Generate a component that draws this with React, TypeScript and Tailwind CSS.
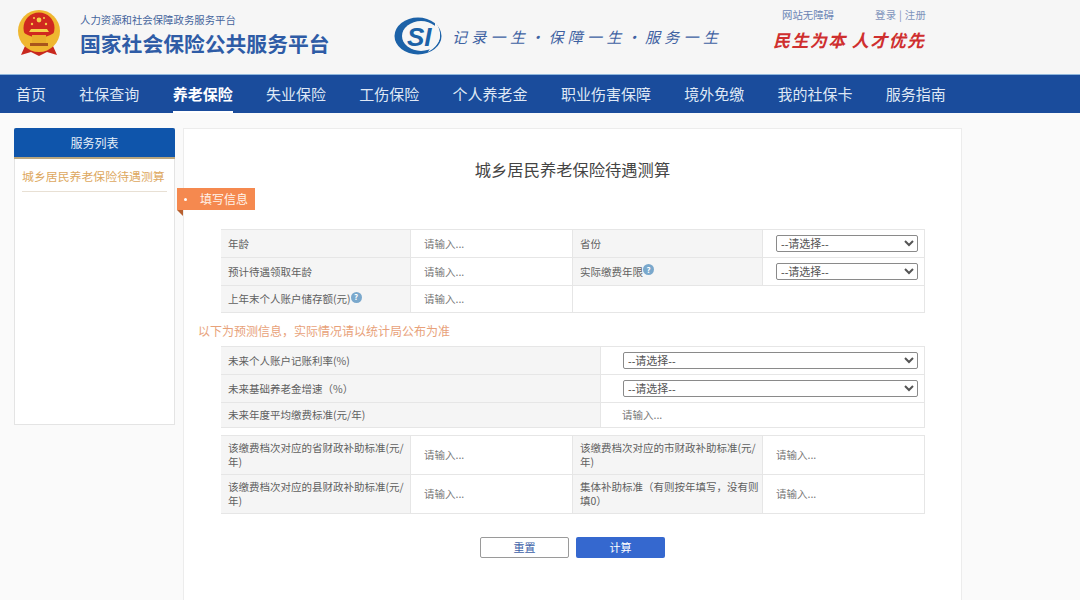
import React from 'react';

const navItems = ['首页', '社保查询', '养老保险', '失业保险', '工伤保险', '个人养老金', '职业伤害保障', '境外免缴', '我的社保卡', '服务指南'];

const Emblem = () => (
  <svg width="44" height="50" viewBox="0 0 44 50">
    <path d="M8 38 L4 47 L14 44 L22 48 L30 44 L40 47 L36 38 Z" fill="#c8281e" />
    <circle cx="22" cy="23" r="21" fill="#efb730" />
    <circle cx="22" cy="20" r="15.5" fill="#d0281f" />
    <path d="M7 25 Q22 34 37 25 L37 33 Q22 42 7 33 Z" fill="#efb730" />
    <rect x="15" y="27" width="14" height="8" fill="#e9ae2c" />
    <rect x="13" y="35" width="18" height="3" fill="#a8551c" />
    <circle cx="22" cy="12" r="2.4" fill="#f5d04a" />
    <circle cx="15" cy="16" r="1.2" fill="#f5d04a" />
    <circle cx="29" cy="16" r="1.2" fill="#f5d04a" />
    <circle cx="17" cy="10" r="1" fill="#f5d04a" />
    <circle cx="27" cy="10" r="1" fill="#f5d04a" />
    <path d="M12 24 H32 L30 21 H14 Z" fill="#f5d04a" />
  </svg>
);

const SiLogo = () => (
  <svg width="48" height="38" viewBox="0 0 48 38">
    <ellipse cx="24" cy="19" rx="23.5" ry="18.5" fill="#1c62a8" />
    <ellipse cx="27" cy="19" rx="19" ry="15" fill="#f6f6f6" />
    <path d="M41 5 Q47 12 46 20 Q44 30 34 35 Q42 24 41 5 Z" fill="#f6f6f6" />
    <text x="13" y="29" fontSize="26" fontWeight="700" fontStyle="italic" fill="#1c62a8" fontFamily="Liberation Sans, sans-serif">SI</text>
  </svg>
);

const Help = () => (
  <span className="inline-flex h-[11px] w-[11px] -translate-y-[3px] items-center justify-center rounded-full bg-[#7aa8cc] text-[8px] leading-none font-bold text-white">?</span>
);

const Label = ({ children, className = '' }: { children: React.ReactNode; className?: string }) => (
  <div className={`flex items-center bg-[#f5f5f5] pl-[7px] text-[10.5px] leading-[14px] text-[#5f5f5f] ${className}`}>
    <span>{children}</span>
  </div>
);

const TextCell = ({ className = '' }: { className?: string }) => (
  <div className={`flex items-center bg-white pl-[13px] ${className}`}>
    <input placeholder="请输入..." className="w-full bg-transparent text-[10.5px] outline-none placeholder:text-[#777]" />
  </div>
);

const SelectCell = ({ className = '' }: { className?: string }) => (
  <div className={`flex items-center bg-white pr-[6px] pl-[13px] ${className}`}>
    <select className="h-[17px] w-full rounded-[2px] border border-[#8a8a8a] bg-white py-0 font-['Liberation_Sans','Noto_Sans_CJK_SC',sans-serif] text-[11px] text-[#555]">
      <option>--请选择--</option>
    </select>
  </div>
);

const cellLines = '[&>div]:border-t [&>div]:border-r [&>div]:border-[#e6e6e6]';

export default function App() {
  return (
    <div className="h-[600px] w-[1080px] overflow-hidden bg-[#fafafa] font-['Noto_Sans_CJK_SC','Liberation_Sans',sans-serif]">
      {/* top banner */}
      <header className="flex h-[75px] items-start border-b border-[#8fb6dc] bg-[#f6f6f6]">
        <div className="mt-[8px] ml-[17px]"><Emblem /></div>
        <div className="mt-[13px] ml-[19px] w-[250px]">
          <div className="text-[10.4px] leading-[14px] text-[#44649c]">人力资源和社会保障政务服务平台</div>
          <div className="mt-[2px] text-[20.8px] leading-[28px] font-bold whitespace-nowrap text-[#2f5ca6]">国家社会保险公共服务平台</div>
        </div>
        <div className="mt-[17px] ml-[64px]"><SiLogo /></div>
        <div className="mt-[25px] ml-[10px] w-[270px] text-[15px] leading-[24px] tracking-[4.3px] whitespace-nowrap text-[#3f62a2] italic">记录一生•保障一生•服务一生</div>
        <div className="mt-[6px] ml-[51px] w-[160px]">
          <div className="flex items-center text-[10.4px] leading-[16px]">
            <span className="mt-[1px] ml-[9px] text-[#6a84b4]">网站无障碍</span>
            <span className="ml-[41px] tracking-[0.3px] text-[#7e94bc]">登录 | 注册</span>
          </div>
          <div className="mt-[5px] text-[17px] leading-[24px] font-bold tracking-[1.4px] whitespace-nowrap text-[#cf2f2f] italic">民生为本 人才优先</div>
        </div>
      </header>

      {/* nav */}
      <nav className="flex h-[38px] items-stretch gap-[33.3px] bg-[#1a4c9c] pl-4">
        {navItems.map((item) => (
          <a
            key={item}
            className={
              item === '养老保险'
                ? 'flex items-center border-b-2 border-white pt-[2px] text-[15px] font-bold whitespace-nowrap text-white'
                : 'flex items-center text-[15px] whitespace-nowrap text-[#dfe8f5]'
            }
          >
            {item}
          </a>
        ))}
      </nav>

      <div className="flex items-start gap-2 pt-[15px] pl-[14px]">
        {/* sidebar */}
        <aside className="h-[297px] w-[161px] border border-[#e4e4e4] bg-white">
          <div className="-mx-px -mt-px flex h-[31px] items-center justify-center rounded-t-[2px] border-b-2 border-[#b9a67e] bg-[#0f55ab] text-[12px] text-[#e6eef8]">服务列表</div>
          <div className="mt-[8px] mr-[7px] ml-[7px] border-b border-[#e8e0d4] pb-[6px] text-[11.9px] leading-[18px] whitespace-nowrap text-[#dda860]">城乡居民养老保险待遇测算</div>
        </aside>

        {/* main panel */}
        <main className="relative h-[480px] w-[779px] border border-[#ececec] bg-white">
          <h1 className="pt-[28px] text-center text-[16.3px] leading-[24px] text-[#444]">城乡居民养老保险待遇测算</h1>

          <div className="absolute top-[59px] -left-[7px] flex h-[22px] w-[78px] items-center bg-[#f5894f] text-[12px] text-[#fff3ea]">
            <span className="ml-[7px] h-[3px] w-[3px] rounded-full bg-white" />
            <span className="ml-[13px]">填写信息</span>
            <span className="absolute top-[22px] left-0 h-0 w-0 border-t-[6px] border-l-[6px] border-t-[#b8602f] border-l-transparent" />
          </div>

          <div className="mt-[48px] ml-[37px] w-[704px]">
            {/* first table */}
            <div className={`grid grid-cols-[190px_162px_190px_162px] grid-rows-[28px_28px_27px] border-b border-[#e6e6e6] ${cellLines}`}>
              <Label>年龄</Label>
              <TextCell />
              <Label>省份</Label>
              <SelectCell />
              <Label>预计待遇领取年龄</Label>
              <TextCell />
              <Label>实际缴费年限<Help /></Label>
              <SelectCell />
              <Label>上年末个人账户储存额(元)<Help /></Label>
              <TextCell />
              <div className="col-span-2 bg-white" />
            </div>

            <p className="mt-[9px] -ml-[23px] text-[12px] leading-[18px] text-[#e8a27a]">以下为预测信息，实际情况请以统计局公布为准</p>

            {/* second table */}
            <div className={`mt-[6px] grid grid-cols-[380px_324px] grid-rows-[28px_28px_25px] border-b border-[#e6e6e6] ${cellLines}`}>
              <Label>未来个人账户记账利率(%)</Label>
              <SelectCell className="!pl-[22px]" />
              <Label>未来基础养老金增速（%）</Label>
              <SelectCell className="!pl-[22px]" />
              <Label>未来年度平均缴费标准(元/年)</Label>
              <TextCell className="!pl-[21px]" />
            </div>

            {/* third table */}
            <div className={`mt-[7px] grid grid-cols-[190px_162px_190px_162px] grid-rows-[39px_39px] border-b border-[#e6e6e6] ${cellLines}`}>
              <Label>该缴费档次对应的省财政补助标准(元/<wbr />年)</Label>
              <TextCell />
              <Label>该缴费档次对应的市财政补助标准(元/<wbr />年)</Label>
              <TextCell />
              <Label>该缴费档次对应的县财政补助标准(元/<wbr />年)</Label>
              <TextCell />
              <Label>集体补助标准（有则按年填写，没有则填0）</Label>
              <TextCell />
            </div>
          </div>

          <div className="mt-[23px] flex justify-center gap-[7px]">
            <button className="h-[21px] w-[89px] rounded-[2px] border border-[#9a9a9a] bg-white text-[11px] text-[#3d5fa8]">重置</button>
            <button className="h-[21px] w-[89px] rounded-[2px] bg-[#3568cf] text-[11px] text-white">计算</button>
          </div>
        </main>
      </div>
    </div>
  );
}
